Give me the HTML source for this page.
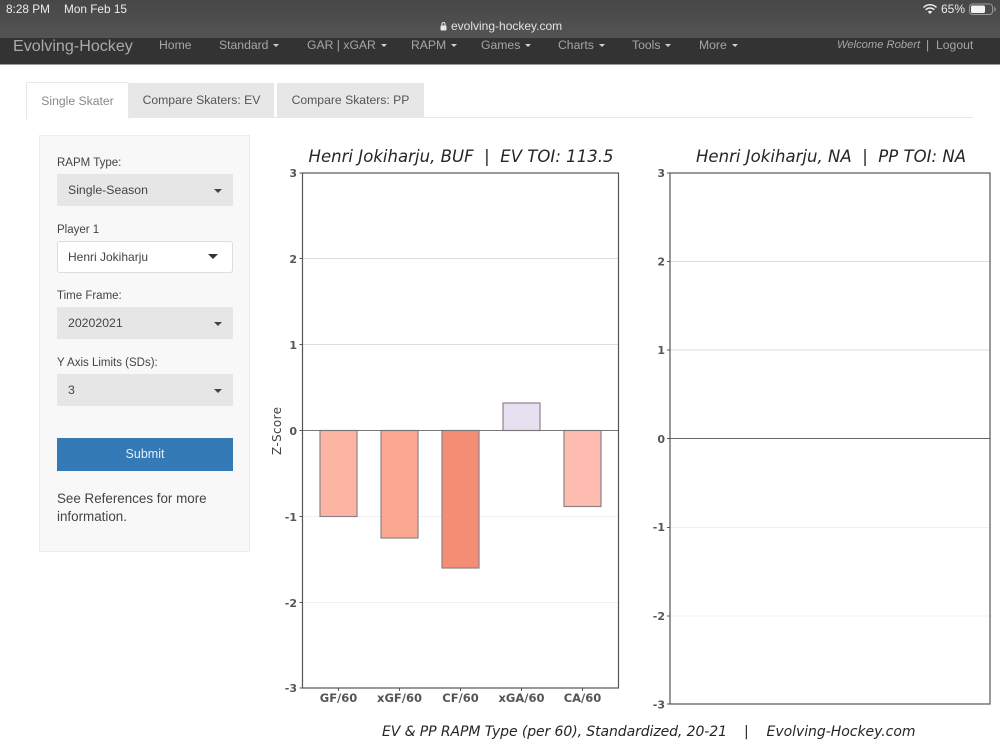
<!DOCTYPE html>
<html>
<head>
<meta charset="utf-8">
<style>
html,body{margin:0;padding:0;background:#fff;}
body{width:1000px;height:750px;overflow:hidden;position:relative;font-family:"Liberation Sans",sans-serif;filter:blur(.3px);}
.a{position:absolute;white-space:nowrap;}
.top{position:absolute;left:0;top:0;width:1000px;height:38px;background:linear-gradient(#474747,#545454);}
.nav{position:absolute;left:0;top:38px;width:1000px;height:26px;background:#333;border-bottom:1px solid #9a9a9a;}
.n{position:absolute;top:38px;color:#a6a6a6;font-size:12.2px;line-height:14px;white-space:nowrap;}
.c{display:inline-block;width:0;height:0;border-left:3.5px solid transparent;border-right:3.5px solid transparent;border-top:3.5px solid #cfcfcf;margin-left:5px;vertical-align:2px;}
.tab{position:absolute;top:83px;height:35px;line-height:35px;text-align:center;font-size:12.2px;color:#555;background:#e7e7e7;}
.side{position:absolute;left:39px;top:135px;width:209px;height:415px;background:#f8f8f8;border:1px solid #ececec;}
.l{position:absolute;left:57px;font-size:11.5px;color:#444;white-space:nowrap;line-height:14px;}
.s{position:absolute;left:57px;width:176px;height:32px;background:#e6e6e6;color:#444;font-size:12.3px;line-height:32px;}
.s span{position:absolute;left:11px;}
.s i{position:absolute;left:157px;top:15px;width:0;height:0;border-left:4px solid transparent;border-right:4px solid transparent;border-top:4px solid #444;}
</style>
</head>
<body>
<div class="top"></div>
<div class="a" style="left:6px;top:2px;color:#ececec;font-size:11.8px;line-height:15px;">8:28 PM</div>
<div class="a" style="left:64px;top:2px;color:#ececec;font-size:11.8px;line-height:15px;">Mon Feb 15</div>
<svg class="a" style="left:439px;top:21px;" width="9" height="11" viewBox="0 0 9 11"><rect x="1.5" y="4.500" width="6" height="5" rx="1" fill="#e8e8e8"/><path d="M3 4.500V3a1.500 1.500 0 0 1 3 0v1.500" fill="none" stroke="#e8e8e8" stroke-width="1"/></svg>
<div class="a" style="left:451px;top:19px;color:#e2e2e2;font-size:12px;line-height:15px;">evolving-hockey.com</div>
<svg class="a" style="left:922px;top:3px;" width="16" height="12" viewBox="0 0 16 12"><path d="M1.500 4.500a9 9 0 0 1 13 0M3.700 6.800a6 6 0 0 1 8.600 0" fill="none" stroke="#eee" stroke-width="1.500"/><path d="M5.800 8.700a3 3 0 0 1 4.400 0L8 11z" fill="#eee"/></svg>
<div class="a" style="left:941px;top:2px;color:#ececec;font-size:12px;line-height:15px;">65%</div>
<svg class="a" style="left:969px;top:3px;" width="28" height="13" viewBox="0 0 28 13"><rect x="0.500" y="1" width="23" height="10.500" rx="3" fill="none" stroke="#9a9a9a"/><rect x="2" y="2.500" width="14" height="7.500" rx="1.500" fill="#f2f2f2"/><path d="M25 4.500c1.500.5 1.500 3 0 3.500" fill="none" stroke="#9a9a9a" stroke-width="1.200"/></svg>

<div class="nav"></div>
<div class="n" style="left:13px;top:37px;font-size:16.1px;line-height:18px;color:#aaa;">Evolving-Hockey</div>
<div class="n" style="left:159px;">Home</div>
<div class="n" style="left:219px;">Standard<i class="c"></i></div>
<div class="n" style="left:307px;">GAR | xGAR<i class="c"></i></div>
<div class="n" style="left:411px;">RAPM<i class="c"></i></div>
<div class="n" style="left:481px;">Games<i class="c"></i></div>
<div class="n" style="left:558px;">Charts<i class="c"></i></div>
<div class="n" style="left:632px;">Tools<i class="c"></i></div>
<div class="n" style="left:699px;">More<i class="c"></i></div>
<div class="n" style="left:837px;font-size:11.2px;"><em>Welcome Robert</em></div>
<div class="n" style="left:926px;">|</div>
<div class="n" style="left:936px;">Logout</div>

<div class="a" style="left:26px;top:117px;width:947px;height:1px;background:#e6e6e6;"></div>
<div class="tab" style="left:26px;top:82px;width:101px;height:36px;line-height:36px;background:#fff;border:1px solid #e8e8e8;border-bottom:0;color:#888;">Single Skater</div>
<div class="tab" style="left:129px;width:145px;">Compare Skaters: EV</div>
<div class="tab" style="left:277px;width:147px;">Compare Skaters: PP</div>

<div class="side"></div>
<div class="l" style="top:156px;">RAPM Type:</div>
<div class="s" style="top:174px;"><span>Single-Season</span><i></i></div>
<div class="l" style="top:223px;">Player 1</div>
<div class="s" style="top:241px;box-sizing:border-box;background:#fff;border:1px solid #ddd;border-radius:3px;height:32px;line-height:30px;font-size:12px;"><span style="left:10px;">Henri Jokiharju</span><i style="left:150px;top:12px;border-left-width:5px;border-right-width:5px;border-top:5px solid #333;"></i></div>
<div class="l" style="top:289px;">Time Frame:</div>
<div class="s" style="top:307px;"><span>20202021</span><i></i></div>
<div class="l" style="top:356px;">Y Axis Limits (SDs):</div>
<div class="s" style="top:374px;"><span>3</span><i></i></div>
<div class="a" style="left:57px;top:438px;width:176px;height:33px;background:#337ab7;color:#e6eef6;font-size:12.5px;line-height:32px;text-align:center;">Submit</div>
<div class="a" style="left:57px;top:490px;font-size:13.4px;line-height:18px;color:#444;">See References for more<br>information.</div>

<svg class="a" style="left:0;top:0;" width="1000" height="750" viewBox="0 0 1000 750">
<style>
.t{font-family:"DejaVu Sans",sans-serif;font-style:italic;font-size:16.500px;fill:#262626;}
.y{font-family:"DejaVu Sans",sans-serif;font-weight:bold;font-size:11px;fill:#555;text-anchor:end;}
.x{font-family:"DejaVu Sans",sans-serif;font-weight:bold;font-size:11.500px;fill:#555;text-anchor:middle;}
</style>
<text class="t" x="308.500" y="162" textLength="305">Henri Jokiharju, BUF &#160;|&#160; EV TOI: 113.5</text>
<g stroke="#dedede" stroke-width="1"><line x1="303" x2="619" y1="258.500" y2="258.500"/><line x1="303" x2="619" y1="344.500" y2="344.500"/></g>
<g stroke="#f0f0f0" stroke-width="1"><line x1="303" x2="619" y1="516.500" y2="516.500"/><line x1="303" x2="619" y1="602.500" y2="602.500"/></g>
<g stroke="#8b8388" stroke-width="1.200">
<rect x="320" y="430.500" width="37" height="86" fill="#fdb5a3"/>
<rect x="381" y="430.500" width="37" height="107.500" fill="#faa890"/>
<rect x="442" y="430.500" width="37" height="137.500" fill="#f58d74"/>
<rect x="503" y="403" width="37" height="27.500" fill="#e6e0f0"/>
<rect x="564" y="430.500" width="37" height="76" fill="#febdb0"/>
</g>
<line x1="303" x2="619" y1="430.500" y2="430.500" stroke="#777" stroke-width="1"/>
<rect x="302.500" y="173" width="316" height="515" fill="none" stroke="#555" stroke-width="1.200"/>
<g stroke="#555" stroke-width="1"><path d="M299.500 173h3M299.500 258.500h3M299.500 344.500h3M299.500 430.500h3M299.500 516.500h3M299.500 602.500h3M299.500 688h3M338.500 688v3M399.500 688v3M460.500 688v3M521.500 688v3M582.500 688v3"/></g>
<text class="y" x="297" y="177">3</text><text class="y" x="297" y="263">2</text><text class="y" x="297" y="349">1</text><text class="y" x="297" y="435">0</text><text class="y" x="297" y="521">-1</text><text class="y" x="297" y="607">-2</text><text class="y" x="297" y="692">-3</text>
<text x="0" y="0" transform="translate(281 455) rotate(-90)" font-family="DejaVu Sans, sans-serif" font-size="12" fill="#444" textLength="48">Z-Score</text>
<text class="x" x="338.500" y="702">GF/60</text><text class="x" x="399.500" y="702">xGF/60</text><text class="x" x="460.500" y="702">CF/60</text><text class="x" x="521.500" y="702">xGA/60</text><text class="x" x="582.500" y="702">CA/60</text>

<text class="t" x="696" y="162" textLength="270">Henri Jokiharju, NA &#160;|&#160; PP TOI: NA</text>
<g stroke="#dedede" stroke-width="1"><line x1="670" x2="990" y1="261.500" y2="261.500"/><line x1="670" x2="990" y1="350" y2="350"/></g>
<g stroke="#f0f0f0" stroke-width="1"><line x1="670" x2="990" y1="527.500" y2="527.500"/><line x1="670" x2="990" y1="616" y2="616"/></g>
<line x1="670" x2="990" y1="438.500" y2="438.500" stroke="#666" stroke-width="1"/>
<rect x="670" y="173" width="320" height="531" fill="none" stroke="#555" stroke-width="1.200"/>
<g stroke="#555" stroke-width="1"><path d="M667 173h3M667 261.500h3M667 350h3M667 438.500h3M667 527.500h3M667 616h3M667 704h3"/></g>
<text class="y" x="665" y="177">3</text><text class="y" x="665" y="265.500">2</text><text class="y" x="665" y="354">1</text><text class="y" x="665" y="443">0</text><text class="y" x="665" y="531">-1</text><text class="y" x="665" y="620">-2</text><text class="y" x="665" y="708.500">-3</text>

<text x="382" y="736" font-family="DejaVu Sans, sans-serif" font-style="italic" font-size="14" fill="#262626" textLength="345">EV &amp; PP RAPM Type (per 60), Standardized, 20-21</text>
<text x="744" y="736" font-family="DejaVu Sans, sans-serif" font-style="italic" font-size="14" fill="#262626">|</text>
<text x="766.500" y="736" font-family="DejaVu Sans, sans-serif" font-style="italic" font-size="14" fill="#262626" textLength="149">Evolving-Hockey.com</text>
</svg>
</body>
</html>
